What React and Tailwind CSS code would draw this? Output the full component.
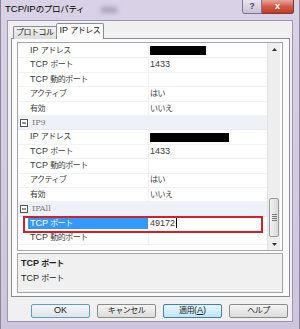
import React from "react";

const CJK = /([\u3000-\u30ff\u4e00-\u9fff\uff00-\uffef]+)/;

function T({ s, k = "n" }) {
  return (
    <span className="whitespace-pre">
      {s.split(CJK).map((p, i) =>
        CJK.test(p) ? (
          <span key={i} className={k === "t" ? "text-[8.5px] tracking-[-0.3px]" : "text-[8px] tracking-[-0.5px]"}>
            {p}
          </span>
        ) : (
          <span key={i}>{p}</span>
        )
      )}
    </span>
  );
}

const rows = [
  { n: "IP アドレス", bar: 56 },
  { n: "TCP ポート", v: "1433" },
  { n: "TCP 動的ポート", v: "" },
  { n: "アクティブ", v: "はい" },
  { n: "有効", v: "いいえ" },
  { cat: "IP9" },
  { n: "IP アドレス", bar: 79 },
  { n: "TCP ポート", v: "1433" },
  { n: "TCP 動的ポート", v: "" },
  { n: "アクティブ", v: "はい" },
  { n: "有効", v: "いいえ" },
  { cat: "IPAll" },
  { n: "TCP ポート", v: "49172", sel: true },
  { n: "TCP 動的ポート", v: "" },
];

function Minus() {
  return (
    <svg width="8" height="8" viewBox="0 0 8 8">
      <rect x="0.5" y="0.5" width="7" height="7" fill="#fff" stroke="#555" />
      <line x1="2" y1="4" x2="6" y2="4" stroke="#222" />
    </svg>
  );
}

function Row({ r }) {
  if (r.cat) {
    return (
      <div className="flex h-[14.4px] items-center bg-[#eef1f7] border-b border-[#e8ebf2]">
        <div className="w-[10px] flex justify-center pl-[1px]">
          <Minus />
        </div>
        <div className="pl-[4px] text-[#7a7a7a] font-['DejaVu_Serif',serif] text-[8px]">{r.cat}</div>
      </div>
    );
  }
  return (
    <div className="flex h-[14.4px] items-stretch border-b border-[#f2f2f2]">
      <div className="w-[10px]" />
      <div
        className={
          "w-[120px] flex items-center pl-[2px] " +
          (r.sel ? "bg-[#3399ff] text-white my-[1px]" : "text-[#3c3c3c]")
        }
      >
        <T s={r.n} />
      </div>
      <div className="flex-1 flex items-center border-l border-[#f0f0f0] pl-[1px] text-[#3c3c3c]">
        {r.bar ? <div className="h-[9px] bg-black" style={{ width: r.bar }} /> : null}
        {r.v ? <T s={r.v} /> : null}
        {r.sel ? <div className="w-[1px] h-[10px] bg-black ml-[1px]" /> : null}
      </div>
    </div>
  );
}

function Btn({ children, blue, def }) {
  return (
    <div
      className={
        "w-[59px] h-[14px] rounded-[2px] border flex items-center justify-center text-[9px] text-[#222] " +
        (blue
          ? "border-[#3c7fb1] bg-gradient-to-b from-[#eaf6fd] to-[#bee6fd]"
          : def
          ? "border-[#5f9ec8] bg-gradient-to-b from-[#f4f7f9] to-[#dfe4e8]"
          : "border-[#8a8a8a] bg-gradient-to-b from-[#f4f4f4] to-[#dcdcdc]")
      }
    >
      {children}
    </div>
  );
}

export default function App() {
  return (
    <div className="w-[300px] h-[329px] flex flex-col bg-gradient-to-b from-[#d9d2e6] to-[#cdc5dc] font-['Liberation_Sans','Noto_Sans_CJK_JP',sans-serif] text-[9px] overflow-hidden border-l border-r border-[#8e889e]">
      {/* title bar */}
      <div className="h-[20px] flex items-start relative">
        <div className="pl-[4px] pt-[4px] text-[9.5px] text-black leading-none">
          <T s="TCP/IPのプロパティ" k="t" />
        </div>
        <div className="ml-[17px] mt-[7px] w-[16px] h-[6px] bg-[#aaa2bb] blur-[2px]" />
        <div className="ml-auto mr-[5px] flex">
          <div className="w-[20px] h-[14px] rounded-bl-[3px] border border-t-0 border-[#7d7790] bg-gradient-to-b from-[#e8e4ef] to-[#c9c2d6] flex items-center justify-center text-[9px] text-[#4a4a6a] font-bold leading-none">
            ?
          </div>
          <div className="w-[32px] h-[14px] rounded-br-[3px] border border-t-0 border-l-0 border-[#7a3a34] bg-gradient-to-b from-[#e8a59c] via-[#d25a48] to-[#c23a26] flex items-center justify-center text-white font-bold text-[9px] leading-none">
            x
          </div>
        </div>
      </div>
      {/* client */}
      <div className="mx-[6px] h-[302px] bg-[#f0f0f0] border border-[#9d97ad] flex flex-col">
        {/* tabs */}
        <div className="h-[18px] pt-[2px] pl-[5px] flex items-end relative z-10 -mb-[1px]">
          <div className="h-[13px] px-[2px] border border-b-0 border-r-0 border-[#898c95] bg-gradient-to-b from-[#f2f2f2] to-[#dcdcdc] flex items-center justify-center text-[#222] rounded-tl-[2px] whitespace-nowrap">
            <T s="プロトコル" />
          </div>
          <div className="h-[16px] px-[3px] border border-b-0 border-[#898c95] bg-[#fbfbfb] flex items-center justify-center text-[#222] rounded-t-[2px] pb-[1px] whitespace-nowrap">
            <T s="IP アドレス" />
          </div>
        </div>
        {/* panel */}
        <div className="ml-[3px] mr-[2px] h-[259px] border border-[#898c95] bg-[#fbfbfb] pt-[3px] pl-[5px] pr-[6px] flex flex-col">
          <div className="h-[209px] border border-[#a6a6a6] bg-white flex relative">
            <div className="flex-1 pt-[1px] flex flex-col">
              {rows.map((r, i) => (
                <Row key={i} r={r} />
              ))}
            </div>
            <div className="w-[13px] mr-[2px] bg-[#eeeeee] border-l border-[#e2e2e2] flex flex-col">
              <div className="h-[12px] flex items-center justify-center">
                <svg width="5" height="3" viewBox="0 0 5 3">
                  <polygon points="2.5,0 5,3 0,3" fill="#333" />
                </svg>
              </div>
              <div className="flex-1" />
              <div className="h-[39px] mx-[1px] mb-[1px] rounded-[2px] border border-[#9a9a9a] bg-gradient-to-r from-[#f4f4f4] to-[#d8d8d8] flex flex-col items-center justify-center gap-[1px]">
                <div className="w-[5px] h-[1px] bg-[#777]" />
                <div className="w-[5px] h-[1px] bg-[#777]" />
                <div className="w-[5px] h-[1px] bg-[#777]" />
                <div className="w-[5px] h-[1px] bg-[#777]" />
              </div>
              <div className="h-[12px] flex items-center justify-center">
                <svg width="5" height="3" viewBox="0 0 5 3">
                  <polygon points="0,0 5,0 2.5,3" fill="#333" />
                </svg>
              </div>
            </div>
            <div className="absolute left-[5px] top-[173px] w-[240px] h-[17px] border-2 border-[#d0202a]" />
          </div>
          <div className="mt-[2px] h-[40px] border border-[#a6a6a6] bg-[#f0f0f0] pl-[3px] pt-[3px] text-[#222]">
            <div className="font-bold leading-[12px]">
              <T s="TCP ポート" />
            </div>
            <div className="mt-[2px] leading-[12px]">
              <T s="TCP ポート" />
            </div>
          </div>
        </div>
        {/* buttons */}
        <div className="mt-[7px] flex justify-end gap-[7px] pr-[4px]">
          <Btn def>OK</Btn>
          <Btn>
            <T s="キャンセル" />
          </Btn>
          <Btn blue>
            <T s="適用" />
            <span>(</span>
            <span className="underline">A</span>
            <span>)</span>
          </Btn>
          <Btn>
            <T s="ヘルプ" />
          </Btn>
        </div>
      </div>
    </div>
  );
}
